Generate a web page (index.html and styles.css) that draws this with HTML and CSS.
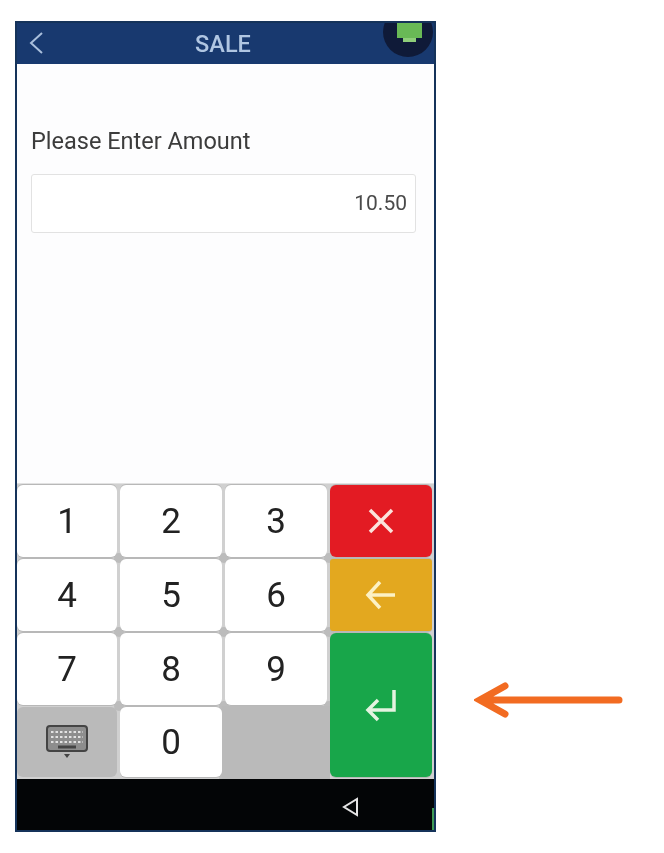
FILE: index.html

```html
<!DOCTYPE html>
<html lang="en">
<head>
    <meta charset="UTF-8">
    <meta name="viewport" content="width=device-width, initial-scale=1.0">
    <title>SALE</title>
    <link rel="stylesheet" href="styles.css">
</head>
<body>

    <div class="page">
        <div class="phone">
            <div class="header">
                <svg class="back" width="16" height="24" viewBox="0 0 16 24"><path d="M14 2 L3 12 L14 22"/></svg>
                <h1>SALE</h1>
                <div class="status">
                    <div class="status-screen"></div>
                    <div class="status-stem"></div>
                </div>
            </div>

            <div class="content">
                <label for="amount">Please Enter Amount</label>
                <div class="amount-box" id="amount">10.50</div>
            </div>

            <div class="keypad">
                <div class="key">1</div>
                <div class="key">2</div>
                <div class="key">3</div>
                <div class="key key-red">
                    <svg width="28" height="28" viewBox="0 0 28 28"><path d="M3 3 L25 25 M25 3 L3 25"/></svg>
                </div>
                <div class="key">4</div>
                <div class="key">5</div>
                <div class="key">6</div>
                <div class="key key-gold">
                    <svg width="32" height="32" viewBox="0 0 32 32"><path d="M30 16 H3 M15 3 L3 16 L15 29"/></svg>
                </div>
                <div class="key">7</div>
                <div class="key">8</div>
                <div class="key">9</div>
                <div class="key key-green">
                    <svg width="32" height="34" viewBox="0 0 32 34"><path d="M29 2 V22 H3 M13 12 L3 22 L13 32"/></svg>
                </div>
                <div class="key key-board">
                    <svg width="42" height="34" viewBox="0 0 42 34">
                        <rect class="board-body" x="1" y="1" width="40" height="25" rx="3"/>
                        <path class="board-keys" d="M5 7 H37 M5 12 H37 M5 17 H37"/>
                        <path class="board-bar" d="M12 22 H30"/>
                        <path class="board-tip" d="M18 29 H24 L21 33 Z"/>
                    </svg>
                </div>
                <div class="key">0</div>
                <div class="key-blank"></div>
            </div>

            <div class="navbar">
                <svg class="nav-back" width="18" height="20" viewBox="0 0 18 20"><path d="M15 2 V18 L2 10 Z"/></svg>
                <div class="nav-edge"></div>
            </div>
        </div>

        <svg class="pointer" width="150" height="40" viewBox="0 0 150 40"><path d="M145 20 H8 M31 6 L6 20 L31 34"/></svg>
    </div>

</body>
</html>
```

FILE: styles.css

```css
body {
    font-family: 'Roboto', 'Liberation Sans', sans-serif;
    background-color: white;
    margin: 0;
    padding: 0;
}
.page {
    display: flex;
    align-items: flex-start;
    padding: 21px 0 0 15px;
}
.phone {
    width: 417px;
    height: 807px;
    border: 2px solid #15335a;
    display: flex;
    flex-direction: column;
    background-color: #fdfdfe;
    filter: blur(0.5px);
}
.pointer {
    margin: 659px 0 0 38px;
    fill: none;
    stroke: #f26b21;
    stroke-width: 7;
    stroke-linecap: round;
    stroke-linejoin: miter;
}

/* header */
.header {
    position: relative;
    height: 41px;
    flex: none;
    display: flex;
    align-items: center;
    justify-content: center;
    background-color: #18396f;
    overflow: hidden;
}
.header h1 {
    margin: 0 0 0 -5px;
    font-size: 23.5px;
    font-weight: 500;
    color: #b0c6e2;
}
.back {
    position: absolute;
    left: 11px;
    top: 8px;
    fill: none;
    stroke: #a9bfdc;
    stroke-width: 2;
}
.status {
    position: absolute;
    right: 1px;
    top: -16px;
    width: 50px;
    height: 50px;
    border-radius: 50%;
    background-color: #0f1a38;
}
.status-screen {
    position: absolute;
    left: 14px;
    top: 16px;
    width: 25px;
    height: 15px;
    background-color: #69b956;
}
.status-stem {
    position: absolute;
    left: 20px;
    top: 31px;
    width: 13px;
    height: 4px;
    background-color: #8fce7a;
}

/* amount */
.content {
    flex: 1;
    padding: 64px 18px 0 14px;
}
.content label {
    display: block;
    font-size: 23.5px;
    line-height: 27px;
    color: #3c3c3c;
}
.amount-box {
    margin-top: 19px;
    height: 57px;
    line-height: 57px;
    padding-right: 8px;
    text-align: right;
    font-size: 21px;
    color: #4a4a4a;
    background-color: white;
    border: 1px solid #e2e2e2;
    border-radius: 3px;
}

/* keypad */
.keypad {
    flex: none;
    isolation: isolate;
    display: grid;
    grid-template-columns: 100px repeat(3, 102px);
    grid-template-rows: repeat(3, 72px) 70px;
    gap: 2px 3px;
    padding: 1px 2px 2px 0;
    background-color: #d0d0d0;
    border-top: 1px solid #e2e2e2;
}
.key {
    position: relative;
    display: flex;
    align-items: center;
    justify-content: center;
    font-size: 35px;
    color: #222;
    background-color: white;
    border-radius: 6px;
    box-shadow: 0 1px 0 #b8b8b8, 0 -1px 0 #b8b8b8;
}
.key::after {
    content: "";
    position: absolute;
    right: -7px;
    bottom: -6px;
    width: 10px;
    height: 10px;
    border-radius: 50%;
    background-color: #bcbcbc;
    z-index: -1;
}
.key svg {
    fill: none;
    stroke-width: 3.5;
}
.key-red {
    background-color: #e31b23;
}
.key-red svg {
    stroke: #fbe3dc;
}
.key-gold {
    background-color: #e3a81f;
    border-radius: 3px;
}
.key-gold svg {
    stroke: #fcf1c4;
}
.key-green {
    grid-row: span 2;
    background-color: #18a64a;
}
.key-green svg {
    stroke: #e4f3e0;
}
.key-red::after,
.key-gold::after,
.key-green::after {
    display: none;
}
.key-board {
    background-color: #bababa;
    box-shadow: none;
}
.key-board::after {
    display: none;
}
.board-body {
    fill: #8d8d8d;
    stroke: #444;
    stroke-width: 2;
}
.key svg .board-keys {
    stroke: #e2e2e2;
    stroke-width: 2;
    stroke-dasharray: 2.5 2;
}
.key svg .board-bar {
    stroke: #444;
    stroke-width: 3;
}
.board-tip {
    fill: #444;
    stroke: none;
}
.key-blank {
    margin: -1px -3px -2px -3px;
    background-color: #bababa;
}

/* bottom bar */
.navbar {
    position: relative;
    height: 51px;
    flex: none;
    display: flex;
    align-items: center;
    justify-content: flex-end;
    padding-right: 74px;
    background-color: #030506;
}
.nav-back {
    margin-top: 4px;
    fill: none;
    stroke: #e4e4e4;
    stroke-width: 2;
}
.nav-edge {
    position: absolute;
    right: 0;
    bottom: 0;
    width: 2px;
    height: 22px;
    background-color: #3f9a55;
}
```
